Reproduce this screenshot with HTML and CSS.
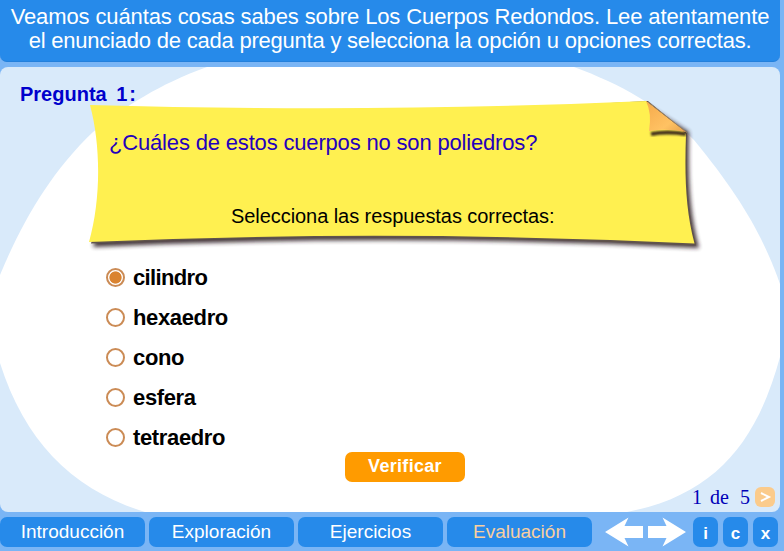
FILE: index.html
```html
<!DOCTYPE html>
<html lang="es">
<head>
<meta charset="utf-8">
<title>Los Cuerpos Redondos</title>
<link rel="stylesheet" href="styles.css">
</head>
<body>
<div class="app">
  <header class="banner">
    <span class="banner-a">Veamos cuántas cosas sabes sobre Los Cuerpos Redondos. Lee atentamente</span>
    <span class="banner-b">el enunciado de cada pregunta y selecciona la opción u opciones correctas.</span>
  </header>
  <main class="stage">
    <svg class="backdrop" viewBox="0 67 780 445" aria-hidden="true">
      <path fill="#fff" d="M207 67C160 84 125 106 93 132C50 173 22 222 0 275V363C25 442 73 490 145 512H627C715 495 757 442 780 357V284C763 236 740 196 694 140C660 106 620 84 574 67Z"/>
    </svg>
    <h1 class="title">Pregunta 1<span class="colon">:</span></h1>
    <section class="note">
      <svg class="paper" viewBox="80 90 640 170" aria-hidden="true">
        <defs>
          <filter id="soft" x="-5%" y="-10%" width="110%" height="130%"><feGaussianBlur stdDeviation="2"/></filter>
          <filter id="fold" x="-20%" y="-150%" width="140%" height="400%"><feGaussianBlur stdDeviation="1.2"/></filter>
          <linearGradient id="curl" x1="0" y1="0" x2="1" y2="1"><stop offset="0" stop-color="#f5a94b"/><stop offset=".65" stop-color="#ffc263"/><stop offset="1" stop-color="#e6a24c"/></linearGradient>
        </defs>
        <path filter="url(#soft)" fill="#302028" opacity=".9" d="M110 125L650 107L689 132C688 175 689 211 699 248Q395 233 93 247C107 205 107 157 110 125Z"/>
        <path fill="#60534c" d="M110 130L648 101L687 133C686 175 687 210 696 245.500Q390 230 91 243.500C104 205 106 157 110 130Z"/>
        <path fill="#fff050" d="M90 105Q380 113 646 101L686 134C684.500 175 685.500 210 694.500 243.500Q390 229 89 242C101 200 101 146 90 105Z"/>
        <path filter="url(#fold)" fill="none" stroke="#3f2f1c" stroke-width="4" d="M651 134Q667 131 686 134"/>
        <path fill="url(#curl)" d="M646 101L686 132Q666 128 649 131Q652 113 646 101Z"/>
        <path fill="none" stroke="#9a8161" d="M648 102L687 132.500"/>
      </svg>
      <p class="question">¿Cuáles de estos cuerpos no son poliedros?</p>
      <p class="hint">Selecciona las respuestas correctas:</p>
    </section>
    <ul class="options">
      <li class="tight"><i class="radio on"></i><span>cilindro</span></li>
      <li><i class="radio"></i><span>hexaedro</span></li>
      <li><i class="radio"></i><span>cono</span></li>
      <li><i class="radio"></i><span>esfera</span></li>
      <li><i class="radio"></i><span>tetraedro</span></li>
    </ul>
    <button class="verify">Verificar</button>
    <div class="pager"><span>1</span><span>de</span><span>5</span><button class="next"><svg viewBox="0 0 20 20"><path d="M6 6L14 10L6 14" fill="none" stroke="#fff" stroke-width="2"/></svg></button></div>
  </main>
  <nav class="bar">
    <a class="tab">Introducción</a>
    <a class="tab">Exploración</a>
    <a class="tab">Ejercicios</a>
    <a class="tab active">Evaluación</a>
    <svg class="arrows" viewBox="604 516 84 32" aria-label="Navegación">
      <path fill="#fff" d="M605 532L628.500 517.500L624.500 526H643V538H624.500L628.500 546.500Z"/>
      <path fill="#fff" d="M686 532L662.500 517.500L666.500 526H648V538H666.500L662.500 546.500Z"/>
    </svg>
    <a class="key">i</a>
    <a class="key">c</a>
    <a class="key">x</a>
  </nav>
</div>
</body>
</html>
```
FILE: styles.css
```css
* { box-sizing: border-box; }
body { margin: 0; font-family: "Liberation Sans", Arial, sans-serif; }
h1, p, ul { margin: 0; padding: 0; font-weight: normal; }
button { border: 0; padding: 0; font: inherit; }

.app {
  width: 784px;
  height: 551px;
  overflow: hidden;
  background: #7ab5f5;
  display: flex;
  flex-direction: column;
}

.banner {
  width: 780px;
  height: 62px;
  padding-top: 5px;
  border-radius: 0 0 7px 7px;
  background: #268aea;
  border-bottom: 1px solid #2380dc;
  color: #fff;
  font-size: 22px;
  line-height: 24px;
  display: flex;
  flex-direction: column;
  align-items: center;
  white-space: nowrap;
}
.banner-a { letter-spacing: -0.116px; }
.banner-b { letter-spacing: -0.217px; }

.stage {
  position: relative;
  width: 780px;
  height: 445px;
  margin-top: 5px;
  border-radius: 8px;
  overflow: hidden;
  background: #d9eafa;
  display: flex;
  flex-direction: column;
}
.backdrop { position: absolute; left: 0; top: 0; width: 780px; height: 445px; }

.title {
  position: relative;
  z-index: 1;
  height: 38px;
  padding: 15px 0 0 20px;
  font-size: 20px;
  line-height: 24px;
  font-weight: bold;
  color: #0000cc;
  white-space: pre;
  word-spacing: 4px;
}
.colon { margin-left: 2px; }

.note {
  position: relative;
  width: 606px;
  height: 144px;
  margin-left: 89px;
}
.paper { position: absolute; left: -9px; top: -15px; width: 640px; height: 170px; }
.question, .hint { position: relative; white-space: nowrap; }
.question {
  padding: 26px 0 0 20px;
  font-size: 22px;
  line-height: 24px;
  letter-spacing: -0.17px;
  color: #2400bd;
}
.hint {
  padding: 49px 0 0 142px;
  font-size: 20px;
  line-height: 24px;
  letter-spacing: -0.06px;
  color: #000;
}

.options {
  position: relative;
  list-style: none;
  margin: 8px 0 0 106px;
}
.options li {
  height: 40px;
  display: flex;
  align-items: center;
  gap: 8px;
  font-size: 22px;
  font-weight: bold;
  letter-spacing: -0.36px;
}
.options li.tight { letter-spacing: -0.65px; }
.options span { padding-top: 2px; }
.radio {
  width: 19px;
  height: 19px;
  border: 2px solid #cb8b55;
  border-radius: 50%;
  background: #fff;
}
.radio.on { background: radial-gradient(circle, #da8330 5.700px, #fff 6.500px); }

.verify {
  position: relative;
  width: 120px;
  height: 30px;
  margin: -5px 0 0 345px;
  padding-bottom: 2px;
  border-radius: 7px;
  background: #ff9b00;
  color: #fff;
  font-size: 18px;
  font-weight: bold;
  letter-spacing: 0.3px;
}

.pager {
  position: relative;
  height: 24px;
  margin: 3px 5px 0 0;
  display: flex;
  justify-content: flex-end;
  align-items: center;
  font: 20px/24px "Liberation Serif", "Times New Roman", serif;
  color: #0000b8;
}
.pager span:nth-child(2) { margin: 0 11px 0 8px; }
.next {
  width: 20px;
  height: 20px;
  margin-left: 5px;
  border-radius: 6px;
  background: #fbcb8b;
}
.next svg { display: block; }

.bar {
  height: 39px;
  padding-top: 5px;
  display: flex;
}
.tab {
  width: 145px;
  height: 30px;
  margin-right: 4px;
  border-radius: 7px;
  background: #268aea;
  color: #fff;
  font-size: 19px;
  line-height: 29px;
  text-align: center;
}
.tab.active { color: #f8cf9f; }
.arrows { width: 84px; height: 32px; margin: -1px 5px 0 8px; }
.key {
  width: 25px;
  height: 30px;
  margin-right: 5px;
  border-radius: 7px;
  background: #268aea;
  color: #fff;
  font-size: 17px;
  font-weight: bold;
  line-height: 34px;
  text-align: center;
}
```
